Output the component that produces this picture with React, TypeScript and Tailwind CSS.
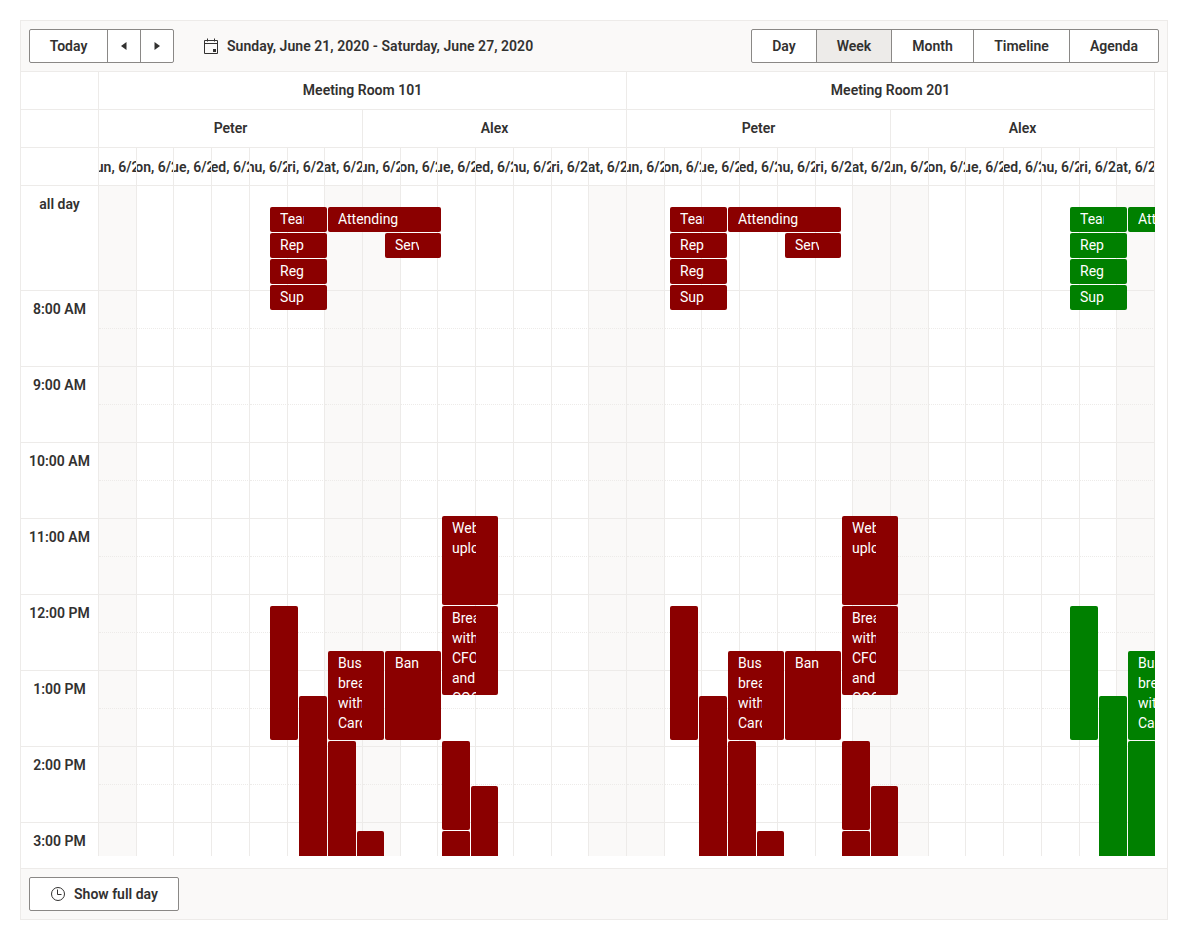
import { Fragment } from 'react';

const BORDER = 'border-[#edebe9]';
const DAYS = ['Sun, 6/21', 'Mon, 6/22', 'Tue, 6/23', 'Wed, 6/24', 'Thu, 6/25', 'Fri, 6/26', 'Sat, 6/27'];
const HOURS = ['8:00 AM', '9:00 AM', '10:00 AM', '11:00 AM', '12:00 PM', '1:00 PM', '2:00 PM', '3:00 PM'];
const VIEWS = [
  { label: 'Day', width: 'w-[65px]' },
  { label: 'Week', width: 'w-[75px]', active: true },
  { label: 'Month', width: 'w-[82px]' },
  { label: 'Timeline', width: 'w-[96px]' },
  { label: 'Agenda', width: 'w-[88px]' },
];

// page pixels for the first group; the other groups repeat them further right
type Ev = { x: number; y: number; w: number; h: number; text?: string; allDay?: boolean };

const EVENTS: Ev[] = [
  { x: 270, y: 207, w: 57, h: 25, text: 'Team meeting', allDay: true },
  { x: 328, y: 207, w: 113, h: 25, text: 'Attending HR Conference', allDay: true },
  { x: 270, y: 233, w: 57, h: 25, text: 'Reporting', allDay: true },
  { x: 385, y: 233, w: 56, h: 25, text: 'Server maintenance', allDay: true },
  { x: 270, y: 259, w: 57, h: 25, text: 'Regular call', allDay: true },
  { x: 270, y: 285, w: 57, h: 25, text: 'Support call', allDay: true },
  { x: 442, y: 516, w: 56, h: 89, text: 'Website upload' },
  { x: 270, y: 606, w: 28, h: 134 },
  { x: 442, y: 606, w: 56, h: 89, text: 'Breakfast with CFO and COO' },
  { x: 328, y: 651, w: 56, h: 89, text: 'Business breakfast with Caroline' },
  { x: 385, y: 651, w: 56, h: 89, text: 'Bank' },
  { x: 299, y: 696, w: 28, h: 200 },
  { x: 328, y: 741, w: 28, h: 200 },
  { x: 442, y: 741, w: 28, h: 89 },
  { x: 471, y: 786, w: 27, h: 120 },
  { x: 357, y: 831, w: 27, h: 60 },
  { x: 442, y: 831, w: 28, h: 60 },
];

const GROUPS = [
  { offset: 0, color: 'bg-[#8b0000]' },
  { offset: 400, color: 'bg-[#8b0000]' },
  { offset: 800, color: 'bg-[#008000]' },
];

function Caret({ dir }: { dir: 'left' | 'right' }) {
  return (
    <svg width="16" height="16" viewBox="0 0 16 16" fill="currentColor">
      {dir === 'left' ? <path d="M10.5 4v8L5 8z" /> : <path d="M5.5 4v8L11 8z" />}
    </svg>
  );
}

function CalendarIcon() {
  return (
    <svg width="16" height="16" viewBox="0 0 16 16" fill="none" stroke="currentColor" strokeWidth="1">
      <path d="M1.5 2.5h13v13h-13zM1.5 5.5h13" />
      <path d="M4.5 0.5v3M11.5 0.5v3" />
      <rect x="10" y="11" width="3" height="3" fill="currentColor" stroke="none" />
    </svg>
  );
}

function ClockIcon() {
  return (
    <svg width="16" height="16" viewBox="0 0 16 16" fill="none" stroke="currentColor" strokeWidth="1">
      <circle cx="8" cy="8" r="6.5" />
      <path d="M7.5 3.5v5h4" />
    </svg>
  );
}

function HeaderCell({ children, className = '' }: { children?: React.ReactNode; className?: string }) {
  return (
    <div className={`flex h-[38px] items-center justify-center overflow-hidden whitespace-nowrap border-b border-r ${BORDER} font-semibold ${className}`}>
      {children}
    </div>
  );
}

function DayCells({ dotted }: { dotted?: boolean }) {
  return (
    <>
      {Array.from({ length: 28 }, (_, i) => (
        <div
          key={i}
          className={`border-r border-b ${BORDER} ${dotted ? '[border-bottom-style:dotted]' : ''} ${i % 7 === 0 || i % 7 === 6 ? 'bg-[#faf9f8]' : ''}`}
        />
      ))}
    </>
  );
}

export default function App() {
  return (
    <div className="p-5 font-['Roboto',sans-serif] text-sm text-[#323130]">
      <div className={`flex h-[900px] w-[1148px] flex-col border ${BORDER}`}>
        {/* Toolbar */}
        <div className={`flex h-[51px] shrink-0 items-center justify-between border-b ${BORDER} bg-[#faf9f8] px-2`}>
          <div className="flex items-center">
            <div className="flex h-[34px] rounded-[2px] border border-[#8a8886] bg-white font-semibold">
              <button className="w-[78px] border-r border-[#8a8886]">Today</button>
              <button className="flex w-[33px] items-center justify-center border-r border-[#8a8886]">
                <Caret dir="left" />
              </button>
              <button className="flex w-[32px] items-center justify-center">
                <Caret dir="right" />
              </button>
            </div>
            <div className="ml-[29px] flex items-center gap-2 font-semibold tracking-[0.04px]">
              <CalendarIcon />
              <span>Sunday, June 21, 2020 - Saturday, June 27, 2020</span>
            </div>
          </div>
          <div className="flex h-[34px] rounded-[2px] border border-[#8a8886] bg-white font-semibold">
            {VIEWS.map((v, i) => (
              <button
                key={v.label}
                className={`${v.width} ${i < VIEWS.length - 1 ? 'border-r border-[#8a8886]' : ''} ${v.active ? 'bg-[#edebe9]' : ''}`}
              >
                {v.label}
              </button>
            ))}
          </div>
        </div>

        {/* Group and date headers */}
        <div className="flex shrink-0">
          <div className={`w-[78px] shrink-0 border-r ${BORDER}`}>
            <div className={`h-[38px] border-b ${BORDER}`} />
            <div className={`h-[38px] border-b ${BORDER}`} />
            <div className={`h-[38px] border-b ${BORDER}`} />
          </div>
          <div className="w-[1056px] shrink-0">
            <div className="grid grid-cols-2">
              <HeaderCell className="pb-0.5">Meeting Room 101</HeaderCell>
              <HeaderCell className="pb-0.5">Meeting Room 201</HeaderCell>
            </div>
            <div className="grid grid-cols-4">
              {['Peter', 'Alex', 'Peter', 'Alex'].map((name, i) => (
                <HeaderCell key={i} className="pb-0.5">{name}</HeaderCell>
              ))}
            </div>
            <div className="grid grid-cols-[repeat(28,minmax(0,1fr))]">
              {Array.from({ length: 28 }, (_, i) => (
                <HeaderCell key={i}>{DAYS[i % 7]}</HeaderCell>
              ))}
            </div>
          </div>
        </div>

        {/* All day row and time slots */}
        <div className="flex h-[670px] shrink-0 overflow-hidden">
          <div className={`w-[78px] shrink-0 border-r ${BORDER} font-semibold`}>
            <div className={`h-[105px] border-b ${BORDER} pt-2 text-center`}>all day</div>
            {HOURS.map((h) => (
              <div key={h} className={`h-[76px] border-b ${BORDER} pt-2 text-center`}>
                {h}
              </div>
            ))}
          </div>
          <div className="relative w-[1056px] shrink-0 overflow-hidden">
            <div className="grid h-[105px] grid-cols-[repeat(28,minmax(0,1fr))]">
              <DayCells />
            </div>
            {HOURS.map((h) => (
              <Fragment key={h}>
                <div className="grid h-[38px] grid-cols-[repeat(28,minmax(0,1fr))]">
                  <DayCells dotted />
                </div>
                <div className="grid h-[38px] grid-cols-[repeat(28,minmax(0,1fr))]">
                  <DayCells />
                </div>
              </Fragment>
            ))}
            {GROUPS.map((g) =>
              EVENTS.map((ev, i) => (
                <div
                  key={`${g.offset}-${i}`}
                  className={`absolute overflow-hidden rounded-[2px] leading-5 text-white ${g.color}`}
                  style={{ left: ev.x + g.offset - 99, top: ev.y - 186, width: ev.w, height: ev.h }}
                >
                  {ev.text && (
                    <div
                      className={`ml-2.5 mt-0.5 overflow-hidden ${ev.allDay ? 'h-5' : 'h-[200px]'}`}
                      style={{ width: ev.w === 57 ? 24 : ev.w - 32 }}
                    >
                      {ev.text}
                    </div>
                  )}
                </div>
              )),
            )}
          </div>
        </div>
        <div className="h-3 shrink-0" />

        {/* Footer */}
        <div className={`flex flex-1 items-center border-t ${BORDER} bg-[#faf9f8] px-2`}>
          <button className="flex h-[34px] w-[150px] items-center justify-center gap-2 rounded-[2px] border border-[#8a8886] bg-white font-semibold">
            <ClockIcon />
            Show full day
          </button>
        </div>
      </div>
    </div>
  );
}
